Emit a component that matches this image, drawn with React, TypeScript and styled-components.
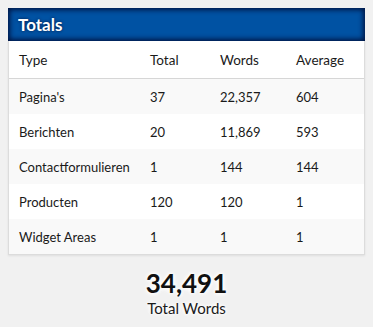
import * as React from 'react';
import styled, { createGlobalStyle } from 'styled-components';

const GlobalStyle = createGlobalStyle`
  html, body {
    margin: 0;
    padding: 0;
    background: #f1f1f1;
  }
  body {
    font-family: 'Lato', 'Noto Sans', sans-serif;
    color: #1a1a1a;
  }
`;

interface Row {
  type: string;
  total: string;
  words: string;
  average: string;
}

const rows: Row[] = [
  { type: "Pagina's", total: '37', words: '22,357', average: '604' },
  { type: 'Berichten', total: '20', words: '11,869', average: '593' },
  { type: 'Contactformulieren', total: '1', words: '144', average: '144' },
  { type: 'Producten', total: '120', words: '120', average: '1' },
  { type: 'Widget Areas', total: '1', words: '1', average: '1' }
];

const Page = styled.div`
  padding: 8px 8px 0 8px;
  width: 357px;
`;

const Header = styled.div`
  height: 33px;
  background: #0052a3;
  box-shadow: inset 0 0 5px 2px #001645;
  display: flex;
  align-items: center;
  padding-left: 10px;
  color: #fff;
  font-size: 17px;
  font-weight: 700;
  text-shadow: 0 0 3px #00153f;
`;

const Card = styled.div`
  background: #fff;
  border: 1px solid #dcdcdc;
  border-top: none;
  box-shadow: 0 1px 2px rgba(0, 0, 0, 0.08);
`;

const Grid = styled.div`
  display: grid;
  grid-template-columns: 131px 70px 76px 1fr;
`;

const HeadRow = styled(Grid)`
  height: 37px;
  align-items: center;
  border-bottom: 1px solid #d6d6d6;
  padding-left: 10px;
  font-size: 13.5px;
`;

const BodyRow = styled(Grid)<{ striped: boolean }>`
  height: 35px;
  align-items: center;
  padding-left: 10px;
  font-size: 13px;
  background: ${(p) => (p.striped ? '#f9f9f9' : '#fff')};
`;

const Summary = styled.div`
  display: flex;
  flex-direction: column;
  align-items: center;
  padding-top: 13px;
  text-shadow: 0 0 4px #fff, 0 0 4px #fff, 0 0 6px #fff;
`;

const BigNumber = styled.div`
  font-size: 26px;
  font-weight: 700;
  color: #111;
  line-height: 30px;
`;

const SmallLabel = styled.div`
  font-size: 15px;
  color: #1a1a1a;
  line-height: 20px;
`;

export default function App() {
  return (
    <Page>
      <GlobalStyle />
      <Header>Totals</Header>
      <Card>
        <HeadRow>
          <span>Type</span>
          <span>Total</span>
          <span>Words</span>
          <span>Average</span>
        </HeadRow>
        {rows.map((r, i) => (
          <BodyRow key={r.type} striped={i % 2 === 0}>
            <span>{r.type}</span>
            <span>{r.total}</span>
            <span>{r.words}</span>
            <span>{r.average}</span>
          </BodyRow>
        ))}
      </Card>
      <Summary>
        <BigNumber>34,491</BigNumber>
        <SmallLabel>Total Words</SmallLabel>
      </Summary>
    </Page>
  );
}
